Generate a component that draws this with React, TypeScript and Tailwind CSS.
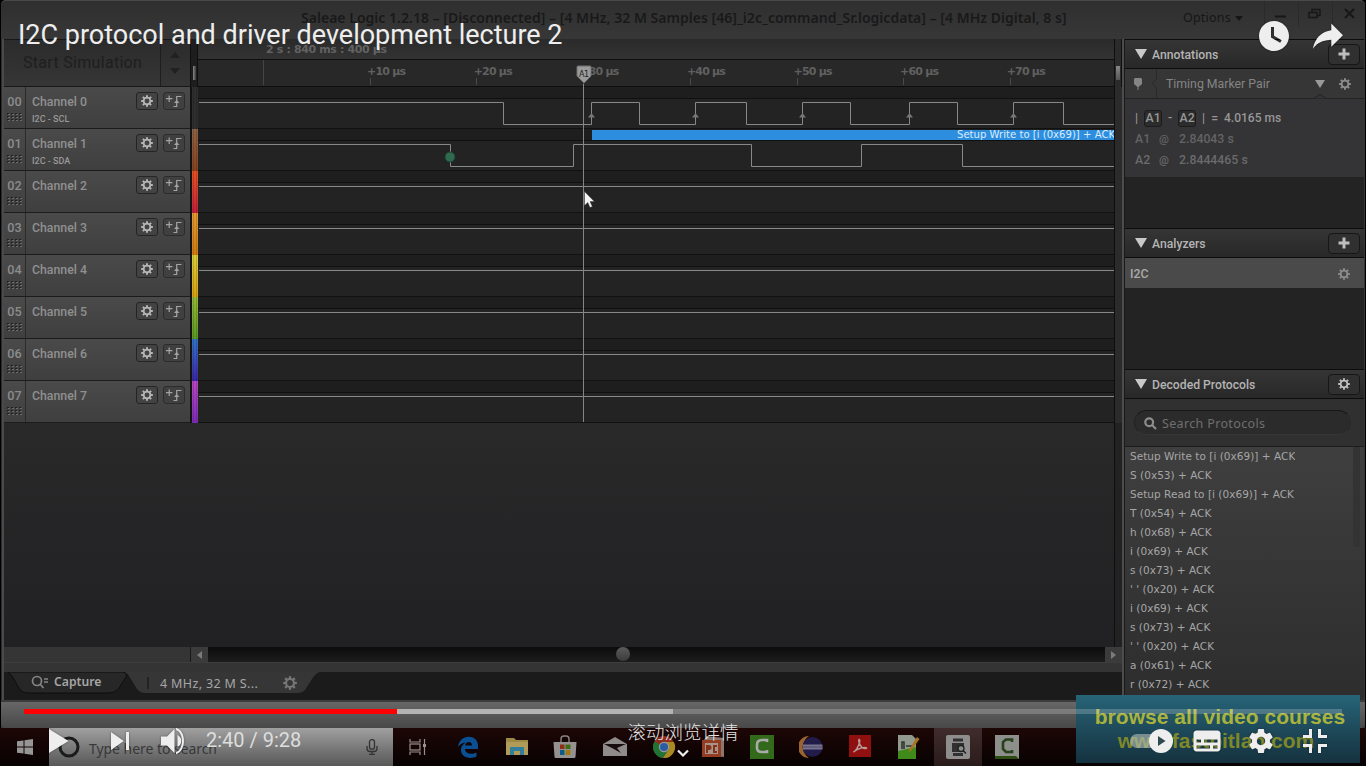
import React from "react";

const UI = "font-['Roboto','Liberation_Sans',sans-serif]";
const HUM = "font-['Noto_Sans','Open_Sans',sans-serif]";
const DJV = "font-['DejaVu_Sans','Noto_Sans',sans-serif]";

function Cog({ className }: { className: string }) {
  return (
    <svg viewBox="0 0 16 16" className={className} fill="none" stroke="currentColor">
      <circle cx="8" cy="8" r="4.5" strokeWidth="2.4" />
      <g strokeWidth="2.6">
        {[0, 45, 90, 135, 180, 225, 270, 315].map((a) => (
          <path key={a} d="M8 3V0.2" transform={`rotate(${a} 8 8)`} />
        ))}
      </g>
    </svg>
  );
}

function Trigger() {
  return (
    <svg viewBox="0 0 16 14" className="h-[14px] w-4" fill="none" stroke="#a3a3a3" strokeWidth="1.2">
      <path d="M0 4.7H6.4M3.2 1.5V7.9M7.5 12.5H10.7V2.5H15.5" />
      <path d="M8 9H13.4L10.7 6Z" fill="#a3a3a3" stroke="none" />
    </svg>
  );
}

function Grip() {
  return (
    <svg viewBox="0 0 15 8" className="h-2 w-[15px]">
      {[0, 1, 2].map((r) =>
        [0, 1, 2, 3].map((c) => (
          <g key={`${r}${c}`}>
            <rect x={c * 4} y={r * 3} width="2" height="1.4" fill="#202020" />
            <rect x={c * 4 + 1} y={r * 3 + 1} width="2" height="1" fill="#6c6c6c" />
          </g>
        )),
      )}
    </svg>
  );
}

const flat = "M1 15.5H916";
const channels = [
  { n: 0, sub: "I2C - SCL", bar: "bg-[#2e2e2e]", d: "M1 15.5H305.5V37.5H393.5V15.5H441.5V37.5H497.5V15.5H548.5V37.5H604.5V15.5H652.5V37.5H711.5V15.5H759.5V37.5H815.5V15.5H865.5V37.5H916" },
  { n: 1, sub: "I2C - SDA", bar: "bg-linear-to-b from-[#8a6244] to-[#87421f]", d: "M1 15.5H252.5V37.5H375.5V15.5H553.5V37.5H663.5V15.5H764.5V37.5H916" },
  { n: 2, bar: "bg-linear-to-b from-[#e2501f] to-[#c11f38]", d: flat },
  { n: 3, bar: "bg-linear-to-b from-[#e09a35] to-[#d07a10]", d: flat },
  { n: 4, bar: "bg-linear-to-b from-[#d6cd3a] to-[#d6a010]", d: flat },
  { n: 5, bar: "bg-linear-to-b from-[#93b53a] to-[#5b9722]", d: flat },
  { n: 6, bar: "bg-linear-to-b from-[#2f70c4] to-[#3b24a4]", d: flat },
  { n: 7, bar: "bg-linear-to-b from-[#b646c0] to-[#7a2cb4]", d: flat },
];

function ChannelRow({ c }: { c: (typeof channels)[number] }) {
  return (
    <div className="flex h-[42px]">
      <div className="flex w-[186px] border-b border-[#1c1c1c] bg-linear-to-b from-[#4a4a4b] to-[#3f3f40]">
        <div className={`flex w-[22px] flex-col items-center border-r border-[#2b2b2b] pt-[7px] ${UI}`}>
          <span className="text-[12.6px] leading-4 font-medium text-[#8c8c8c]">0{c.n}</span>
          <span className="mt-[3px]"><Grip /></span>
        </div>
        <div className={`flex-1 pt-[7px] pl-[6px] ${UI}`}>
          <div className="text-[12.3px] leading-4 font-medium text-[#909090]">Channel {c.n}</div>
          {c.sub && <div className="mt-[3px] text-[9px] leading-3 font-medium text-[#999]">{c.sub}</div>}
        </div>
        <div className="flex gap-[5px] pt-[5px] pr-[5px]">
          <span className="flex h-[18px] w-[22px] items-center justify-center rounded-[3px] border border-[#242424] bg-[#434343] text-[#b6b6b6]">
            <Cog className="size-3" />
          </span>
          <span className="flex h-[18px] w-[22px] items-center justify-center rounded-[3px] border border-[#2c2c2c] bg-[#404040]">
            <Trigger />
          </span>
        </div>
      </div>
      <div className="flex w-2 border-l-2 border-[#121212]">
        <div className={`flex w-[6px] justify-center gap-[2px] ${c.bar}`}>
          <i className="w-px bg-black/15" />
          <i className="w-px bg-black/15" />
        </div>
      </div>
      <div className="w-[916px] border-b border-[#111] bg-[#232324]">
        <div className="h-3 border-b border-[#101010] bg-[#1e1e1f]" />
        <svg viewBox="0 12 916 29" className="block h-[29px] w-[916px]" fill="none">
          <path d={c.d} stroke="#888" />
          {c.n === 0 &&
            [393.5, 497.5, 604.5, 711.5, 815.5].map((x) => (
              <path key={x} d={`M${x - 3.5} 30.5L${x} 26L${x + 3.5} 30.5Z`} fill="#777" />
            ))}
          {c.n === 1 && <circle cx="252" cy="28" r="5" fill="#2f6b4e" stroke="#1d4131" />}
        </svg>
      </div>
      <div className="w-2 border-l border-[#0e0e0e] bg-[#2b2b2b]" />
    </div>
  );
}

function Ruler() {
  return (
    <svg viewBox="0 0 916 48" className="h-[48px] w-[916px] shrink-0">
      <defs>
        <linearGradient id="rt" x2="0" y2="1"><stop stopColor="#2a2a2a" /><stop offset="1" stopColor="#333" /></linearGradient>
      </defs>
      <rect width="916" height="20" fill="url(#rt)" />
      <rect y="20" width="916" height="1" fill="#0e0e0e" />
      <rect y="21" width="916" height="26" fill="#282828" />
      <rect y="47" width="916" height="1" fill="#0e0e0e" />
      <text x="68" y="14" textLength="121" className="fill-[#626262] font-['DejaVu_Sans'] text-[11px] font-bold">2 s : 840 ms : 400 µs</text>
      <path d="M65.5 21V46" stroke="#454545" />
      {[1, 2, 3, 4, 5, 6, 7].map((i) => (
        <g key={i}>
          <path d={`M${Math.round(65 + i * 106.7) + 0.5} 39V46`} stroke="#4a4a4a" />
          <text x={62.5 + i * 106.6} y="36" textLength="39" className="fill-[#606060] font-['DejaVu_Sans'] text-[11px] font-bold">+{i}0 µs</text>
        </g>
      ))}
    </svg>
  );
}

function PanelHeader({ title, cog }: { title: string; cog?: boolean }) {
  return (
    <div className="flex h-[30px] shrink-0 items-center border-y border-[#0d0d0d] bg-linear-to-b from-[#353535] to-[#282828] pr-1 pl-[10px]">
      <svg viewBox="0 0 12 10" className="mb-px h-[10px] w-3"><path d="M0 0H12L6 10Z" fill="#c9c9c9" /></svg>
      <span className={`ml-[5px] flex-1 pt-[2px] text-[12.2px] font-medium text-[#b4b4b4] ${UI}`}>{title}</span>
      <span className="flex h-[21px] w-8 items-center justify-center rounded-[4px] border border-[#161616] bg-[#303030] text-[#bdbdbd]">
        {cog ? <Cog className="size-[12px]" /> : <svg viewBox="0 0 12 12" className="size-3"><path d="M6 .5V11.5M.5 6H11.5" stroke="currentColor" strokeWidth="3" /></svg>}
      </span>
    </div>
  );
}

const decoded = [
  "Setup Write to [i (0x69)] + ACK", "S (0x53) + ACK", "Setup Read to [i (0x69)] + ACK", "T (0x54) + ACK",
  "h (0x68) + ACK", "i (0x69) + ACK", "s (0x73) + ACK", "' ' (0x20) + ACK", "i (0x69) + ACK", "s (0x73) + ACK",
  "' ' (0x20) + ACK", "a (0x61) + ACK", "r (0x72) + ACK",
];

function SidePanel() {
  return (
    <div className="flex h-[661px] w-[239px] flex-col overflow-hidden rounded-b-[4px] bg-[#232324]">
      <PanelHeader title="Annotations" />
      <div className="relative flex h-[30px] items-center border-b border-[#222] bg-[#363636] pr-[13px] pl-[9px]">
        <svg viewBox="0 0 8 12" className="h-3 w-2"><path d="M1 0H7L8 1V6L4.5 9V12H3.5V9L0 6V1Z" fill="#858585" /></svg>
        <svg viewBox="0 0 8 29" className="ml-2 h-[29px] w-2" fill="none"><path d="M6.5 0V10L2.5 14.5L6.5 19V29" stroke="#292929" /></svg>
        <span className={`ml-2 flex-1 pt-px text-[12.3px] text-[#858585] ${UI}`}>Timing Marker Pair</span>
        <svg viewBox="0 0 10 8" className="h-2 w-[10px]"><path d="M0 0H10L5 8Z" fill="#9a9a9a" /></svg>
        <Cog className="ml-[14px] size-3 text-[#8d8d8d]" />
        <svg viewBox="0 0 12 5" className="absolute right-[38px] bottom-[-1px] h-[5px] w-3"><path d="M0 4.5L6 .5L12 4.5" fill="#343335" stroke="#222" /></svg>
      </div>
      <div className={`h-[78px] bg-[#343335] pt-[9px] pl-[10px] text-[12.3px] leading-[21px] font-medium ${UI}`}>
        <div className="flex items-center text-[#979797]">
          <span>|</span>
          <span className="ml-[6px] w-[18px] rounded-[3px] border border-[#1c1c1c] bg-[#2c2c2d] text-center leading-[15px]">A1</span>
          <span className="w-4 text-center">-</span>
          <span className="w-[18px] rounded-[3px] border border-[#1c1c1c] bg-[#2c2c2d] text-center leading-[15px]">A2</span>
          <span className="ml-[6px]">|</span>
          <span className="ml-[6px]">=</span>
          <span className="ml-[6px] text-[12px]">4.0165 ms</span>
        </div>
        <div className="flex text-[#636364]"><span className="w-6">A1</span><span className="w-5 text-[11px]">@</span><span>2.84043 s</span></div>
        <div className="flex text-[#6a6a6b]"><span className="w-6">A2</span><span className="w-5 text-[11px]">@</span><span>2.8444465 s</span></div>
      </div>
      <div className="h-[51px] shrink-0" />
      <PanelHeader title="Analyzers" />
      <div className={`flex h-[30px] shrink-0 items-center justify-between bg-[#4a4a4a] pt-[3px] pr-[14px] pl-[5px] text-[12.3px] font-medium text-[#aaa] ${UI}`}>
        I2C
        <Cog className="mb-[2px] size-3 text-[#8b8b8b]" />
      </div>
      <div className="h-[81px] shrink-0" />
      <PanelHeader title="Decoded Protocols" cog />
      <div className="h-[47px] shrink-0 bg-[#303031] px-[9px] pt-[11px]">
        <div className={`flex h-[25px] w-[217px] items-center rounded-full border border-t-[#181818] border-r-[#2a2a2a] border-b-[#363636] border-l-[#222] bg-[#2b2b2b] pt-[3px] pl-[9px] text-[12.5px] tracking-[0.35px] text-[#6f6f6f] ${HUM}`}>
          <svg viewBox="0 0 13 13" className="mr-[5px] mb-px size-[13px]" fill="none" stroke="#8d8d8d" strokeWidth="2.2"><circle cx="5.2" cy="5.2" r="3.9" /><path d="M8 8L12 12" /></svg>
          Search Protocols
        </div>
      </div>
      <div className={`flex min-h-0 flex-1 justify-between border-t border-[#1c1c1c] bg-linear-to-b from-[#3f3f3f] to-[#2d2d2e] pl-[5px] text-[10.5px] tracking-[0.03px] text-[#a6a6a6] ${DJV}`}>
        <div className="overflow-hidden">
          {decoded.map((t, i) => (
            <div key={i} className="h-[19px] leading-[19px] whitespace-pre">{t}</div>
          ))}
        </div>
        <div className="mr-1 h-[100px] w-[7px] bg-[#333]" />
      </div>
    </div>
  );
}

function TabStrip() {
  return (
    <div className="relative h-[28px]">
      <svg viewBox="1 0 1118 28" className="h-[28px] w-[1118px]">
        <rect width="1119" height="28" fill="#1b1b1c" />
        <path d="M100 0H317C313 1 311 4 309 7L302 18Q299 21 294 21H142Q137 21 134 17L126 4Q124 0 118 0Z" fill="#363637" />
        <path d="M5 0H120Q125 1 123 5L116 16Q112 21 105 21H25Q19 21 16 16L9 4Z" fill="#272728" stroke="#0d0d0d" />
        <path d="M145 5V17" stroke="#222" strokeWidth="2" />
        <g fill="none" stroke="#858585" strokeWidth="1.7">
          <circle cx="34" cy="9" r="4.5" />
          <path d="M37 12L40.5 16M41 7H45M41 10H45" />
        </g>
      </svg>
      <span className={`absolute top-0 left-[50px] text-[12.2px] leading-[19px] font-semibold text-[#a5a5a5] ${HUM}`}>Capture</span>
      <span className={`absolute top-[2px] left-[156px] text-[12.5px] leading-[19px] tracking-[0.35px] text-[#a6a6a6] ${HUM}`}>4 MHz, 32 M S...</span>
      <span className="absolute top-[4px] left-[279px] text-[#777]"><Cog className="size-[14px]" /></span>
    </div>
  );
}

function CapturePane() {
  return (
    <div className="relative w-[1118px] overflow-hidden">
      <div className="flex h-[48px]">
        <div className="flex w-[186px] border-y border-[#171717] bg-linear-to-b from-[#2b2b2b] to-[#363636]">
          <span className={`w-[157px] border-r border-[#1e1e1e] pt-[11px] pl-[19px] text-[16px] leading-6 tracking-[0.3px] whitespace-nowrap text-[#1e1e1e] ${UI}`}>
            Start Simulation
          </span>
          <svg viewBox="0 0 10 22" className="mt-3 ml-[9px] h-[22px] w-[10px]" fill="#212121"><path d="M0 6L5 0L10 6ZM0 16L5 22L10 16Z" /></svg>
        </div>
        <div className="flex w-2 items-end justify-center border-x border-[#0f0f0f] bg-[#1e1e1e] pb-[7px]">
          <div className="h-[14px] w-[3px] bg-linear-to-r from-[#888] to-[#3c3c3c]" />
        </div>
        <Ruler />
        <div className="flex w-2 items-end justify-center border-x border-[#0f0f0f] bg-[#2b2b2b] pb-[7px]">
          <div className="h-[14px] w-[4px] bg-linear-to-b from-[#888] to-[#555]" />
        </div>
      </div>
      {channels.map((c) => <ChannelRow key={c.n} c={c} />)}
      <div className="flex h-[224px] justify-between bg-linear-to-b from-[#29292a] to-[#212123]">
        <i />
        <div className="w-2 border-l border-[#0e0e0e] bg-[#222]" />
      </div>
      <div className="flex h-[15px]">
        <div className="w-[187px] border-r border-[#181818] bg-[#353536]" />
        <div className="flex w-[17px] items-center justify-center bg-[#3b3b3c]"><svg viewBox="0 0 5 8" className="h-2 w-[5px]"><path d="M5 0V8L0 4Z" fill="#7b7b7b" /></svg></div>
        <div className="flex flex-1 justify-center bg-linear-to-b from-[#0c0c0c] to-[#1d1d1d] pr-[67px]">
          <div className="size-[14px] rounded-full bg-linear-to-b from-[#5b5b5b] to-[#3c3c3c]" />
        </div>
        <div className="flex w-[17px] items-center justify-center bg-[#3b3b3c]"><svg viewBox="0 0 5 8" className="h-2 w-[5px]"><path d="M0 0V8L5 4Z" fill="#7b7b7b" /></svg></div>
      </div>
      <div className="h-[10px] border-t border-[#3d3d3d] bg-[#343435]" />
      <TabStrip />

      <div className={`absolute top-[91px] left-[588px] flex h-[10px] w-[522px] items-center overflow-hidden bg-[#2d8ee0] pl-[365px] text-[10.1px] leading-[10px] text-[#dcecfb] ${DJV}`}>
        <span className="whitespace-nowrap">Setup Write to [i (0x69)] + ACK</span>
      </div>
      <div className="absolute top-[45px] left-[579px] h-[338px] w-px bg-[#858585]" />
      <svg viewBox="0 0 16 19" className="absolute top-[26px] left-[572px] h-[19px] w-4">
        <path d="M1 2Q1 1 2 1H14Q15 1 15 2V11L8 18L1 11Z" fill="#9b9b9b" stroke="#707070" />
        <text x="3" y="11.5" textLength="10" className="fill-[#222] font-['DejaVu_Sans'] text-[8px]">A1</text>
      </svg>
      <svg viewBox="0 0 11 17" className="absolute top-[152px] left-[580px] h-[17px] w-[11px]">
        <path d="M.5 .5V14.5L3.8 11.5L6 16.5L8.3 15.5L6 10.5H10.3Z" fill="#f4f4f4" stroke="#333" strokeWidth=".4" />
      </svg>
    </div>
  );
}

function Taskbar() {
  return (
    <div className="flex h-[38px] bg-linear-to-b from-[#1d0706] to-[#080202]">
      <div className="flex w-[49px] items-center justify-center pl-[1px]">
        <svg viewBox="0 0 16 16" className="size-4" fill="#969696"><path d="M0 2.3L6.5 1.4V7.5H0ZM7.5 1.2L16 0V7.5H7.5ZM0 8.5H6.5V14.6L0 13.7ZM7.5 8.5H16V16L7.5 14.8Z" /></svg>
      </div>
      <div className="flex w-[344px] items-center bg-linear-to-b from-[#a0a0a0] to-[#585858] pr-[15px] pl-2">
        <svg viewBox="0 0 22 22" className="ml-px size-[22px]" fill="none"><circle cx="11" cy="11" r="9" stroke="#1b1b1b" strokeWidth="3" /></svg>
        <span className={`ml-[9px] flex-1 pt-[3px] text-[14px] tracking-[-0.05px] text-[#383838] ${HUM}`}>Type here to search</span>
        <svg viewBox="0 0 12 16" className="h-4 w-3" fill="none" stroke="#333" strokeWidth="1.3"><rect x="3.5" y=".7" width="5" height="9.5" rx="2.3" /><path d="M1 7V9.5Q1 12.5 4 12.5H8Q11 12.5 11 9.5V7M6 12.5V15M3 15.3H9" /></svg>
      </div>
      <div className="flex items-center">
        <Slot><svg viewBox="0 0 18 16" className="h-4 w-[18px]" fill="none" stroke="#9a8f8d" strokeWidth="1.2"><path d="M1 0V3H11V0M1 16V13H11V16M15.5 0V16" /><rect x="1" y="5" width="10" height="6" /><path d="M14 5H17V8H14Z" fill="#9a8f8d" stroke="none" /></svg></Slot>
        <Slot><svg viewBox="0 0 22 22" className="ml-[2px] size-[22px]"><path d="M1 11C2 4 7 0.5 12 0.8C18 1 21 5 21 10V13H8C8 17 14 19.5 19.5 16.5V20.5C12 24 3.5 21 4 13.5C4 10.5 6 8 9 6.5C6 6.5 3 8 1 11ZM8.2 9.5H15C15 4.5 8.5 5 8.2 9.5Z" fill="#0a4f92" /></svg></Slot>
        <Slot><svg viewBox="0 0 22 20" className="ml-[2px] h-5 w-[22px]"><path d="M0 1H8L10 3H22V18H0Z" fill="#9d8844" /><path d="M0 5H22V18H0Z" fill="#b09b58" /><path d="M4 18V11Q4 10 5 10H17Q18 10 18 11V18H14V14H8V18Z" fill="#317f9c" /></svg></Slot>
        <Slot><svg viewBox="0 0 24 24" className="size-6"><path d="M8 7V4Q8 1 11 1H13Q16 1 16 4V7" fill="none" stroke="#898381" strokeWidth="1.4" /><path d="M0.5 7H23.5L22.5 22Q22.5 23 21 23H3Q1.5 23 1.5 22Z" fill="#959191" /><path d="M7 9.5H11.5V14H7Z" fill="#8d2e12" /><path d="M12.5 9.5H17.5V14H12.5Z" fill="#3d6d14" /><path d="M7 15H11.5V20H7Z" fill="#0b5a85" /><path d="M12.5 15H17.5V20H12.5Z" fill="#a07812" /></svg></Slot>
        <Slot><svg viewBox="0 0 24 20" className="ml-[2px] h-5 w-6"><path d="M0 7L12 0L24 7V19H0Z" fill="#8e8b8a" /><path d="M1 7H23L14 11L18 16L9 11Z" fill="#170d0c" /></svg></Slot>
        <Slot><svg viewBox="0 0 24 24" className="ml-[2px] size-6"><circle cx="12" cy="12" r="11" fill="#8e2d20" /><path d="M12 12L2.5 6.5A11 11 0 0 0 11 23L17 14Z" fill="#1f7334" /><path d="M12 7H21.8A11 11 0 0 1 11 23L17 14Z" fill="#a98b21" /><circle cx="12" cy="12" r="5.2" fill="#9a9a9a" /><circle cx="12" cy="12" r="4" fill="#285da3" /></svg></Slot>
        <Slot><svg viewBox="0 0 24 24" className="ml-[2px] size-6"><path d="M5 1L23 3V22L5 20Z" fill="#8b7770" /><path d="M1 5H20V22H1Z" fill="#943d22" /><path d="M4 8H17V19H4Z" fill="#a79389" /><path d="M5 18V10H8Q10.5 10 10.5 12.5T8 15H7V18ZM16 10V12H14V16H16V18H12V10Z" fill="#843119" /></svg></Slot>
        <Slot><svg viewBox="0 0 24 24" className="ml-[2px] size-6"><path d="M0 0H24V24H0Z" fill="#32691b" /><path d="M17 7V5H12Q7 5 7 10V13Q7 17 12 17H17V15" fill="none" stroke="#aaa" strokeWidth="2.6" /></svg></Slot>
        <Slot><svg viewBox="0 0 24 24" className="ml-[2px] size-6"><path d="M10 1A11 11 0 0 0 10 23A13 13 0 0 1 10 1Z" fill="#9b632d" /><circle cx="13.5" cy="12" r="10" fill="#211c49" /><path d="M4 9.5H23.5V14.5H4Z" fill="#77748e" /><path d="M4 12H23.5" stroke="#4a4770" /></svg></Slot>
        <Slot><svg viewBox="0 0 22 22" className="ml-[2px] size-[22px] -translate-y-px"><path d="M0 0H22V22H0Z" fill="#8f100f" /><path d="M4.5 17C7 16 12 7 10.5 4.5C9 4 9.5 9 13 12.5C15 14 18 14 17.5 12.8C15 11.5 8 14 4.5 17Z" fill="none" stroke="#b69b99" strokeWidth="1.4" /></svg></Slot>
        <Slot><svg viewBox="0 0 24 24" className="size-6"><path d="M2 0H16L20 4V24H2Z" fill="#929a8d" /><path d="M2 16L20 12V24H2Z" fill="#3f8a19" /><path d="M6 14V7H8V14M10 11H16" fill="none" stroke="#303830" strokeWidth="1.6" /><path d="M21 2L23.5 4L15 16L13 17L13.5 14Z" fill="#a7741d" /></svg></Slot>
        <div className="ml-[2px] flex h-[38px] w-12 items-center justify-center bg-linear-to-b from-[#402c2c] to-[#2a1b1b]">
          <svg viewBox="0 0 24 24" className="size-6"><rect width="24" height="24" rx="2" fill="#8e8e8e" /><path d="M7 3.5H17V6.5H7ZM7 18H17V21H7Z" fill="#303030" /><path d="M6 8H18V17H6Z" fill="#303030" /><circle cx="15" cy="13.5" r="3" fill="#8e8e8e" stroke="#222" strokeWidth="1.3" /><path d="M17 15.5L20 18.5" stroke="#222" strokeWidth="1.6" /></svg>
        </div>
        <Slot><svg viewBox="0 0 24 24" className="size-6"><path d="M0 0H24V24H0Z" fill="#8c8f8a" /><path d="M0 21H21L24 24H0Z" fill="#2c4c12" /><path d="M17 7V4.5H11L8 7V14L11 17H17V15" fill="none" stroke="#29401c" strokeWidth="2.6" /></svg></Slot>
      </div>
    </div>
  );
}

function Slot({ children }: { children: React.ReactNode }) {
  return <div className="flex w-[49px] items-center justify-center">{children}</div>;
}

function PlayerIcon({ d }: { d: string }) {
  return <svg viewBox="0 0 36 36" className="size-[54px] shrink-0 drop-shadow-[0_0_1px_rgba(0,0,0,0.4)]" fill="#eee" fillRule="evenodd"><path d={d} /></svg>;
}

const I = {
  clock: "M18 8C12.47 8 8 12.47 8 18C8 23.52 12.47 28 18 28C23.52 28 28 23.52 28 18C28 12.47 23.52 8 18 8ZM16 19.02L16 12L18 12L18 17.86L23.1 20.81L22.1 22.54Z",
  share: "m20.2 14.19 0-4.45 7.79 7.79-7.79 7.56 0-4.56C16.27 20.69 12.1 21.81 9.34 24.76 8.8 25.13 7.6 27.29 8.12 25.65 9.08 21.32 11.8 17.18 15.98 15.38c1.33-.6 2.76-.98 4.21-1.19z",
  play: "M12 26L25 18L12 10z",
  next: "M12 24L20.5 18L12 12V24zM22 12v12h2V12h-2z",
  volume: "M8 21H12L17 26V10L12 15H8ZM19 14V22C20.48 21.32 21.5 19.77 21.5 18C21.5 16.26 20.48 14.74 19 14ZM18 10.6C20.7 11.4 22 14.83 22 18C22 21.17 20.7 24.6 18 25.4V26.77C21.3 25.86 23.3 22.28 23.3 18C23.3 13.72 21.3 10.14 18 9.23Z",
  subs: "M11 11C9.89 11 9 11.9 9 13V23C9 24.1 9.89 25 11 25H25C26.1 25 27 24.1 27 23V13C27 11.9 26.1 11 25 11ZM11 17H14V19H11ZM20 23H11V21H20ZM25 23H22V21H25ZM25 19H16V17H25Z",
  cog: "m23.94 18.78c.03-.25.05-.51.05-.78 0-.27-.02-.52-.05-.78l1.68-1.32c.15-.12.19-.33.09-.51l-1.6-2.76c-.09-.17-.31-.24-.48-.17l-1.99.8c-.41-.32-.86-.58-1.35-.78l-.3-2.12c-.02-.19-.19-.33-.39-.33l-3.2 0c-.2 0-.36.14-.39.33l-.3 2.12c-.48.2-.93.47-1.35.78l-1.99-.8c-.18-.07-.39 0-.48.17l-1.6 2.76c-.1.17-.05.39.09.51l1.68 1.32c-.03.25-.05.52-.05.78 0 .26.02.52.05.78l-1.68 1.32c-.15.12-.19.33-.09.51l1.6 2.76c.09.17.31.24.48.17l1.99-.8c.41.32.86.58 1.35.78l.3 2.12c.02.19.19.33.39.33l3.2 0c.2 0 .36-.14.39-.33l.3-2.12c.48-.2.93-.47 1.35-.78l1.99.8c.18.07.39 0 .48-.17l1.6-2.76c.09-.17.05-.39-.09-.51l-1.68-1.32zm-5.94 2.01c-1.54 0-2.8-1.25-2.8-2.8 0-1.54 1.25-2.8 2.8-2.8 1.54 0 2.8 1.25 2.8 2.8 0 1.54-1.25 2.8-2.8 2.8z",
  shrink: "M14 14H10V16H16V10H14ZM22 14V10H20V16H26V14ZM20 26H22V22H26V20H20ZM10 22H14V26H16V20H10Z",
};

function PlayerOverlay() {
  return (
    <div className="absolute inset-0 flex flex-col justify-between overflow-hidden">
      <div className="flex h-[63px] pt-[9px] pr-[11px] pl-[18px]">
        <h1 className="flex-1 pt-[10px] font-['Roboto'] text-[27px] leading-8 text-[#eee]">I2C protocol and driver development lecture 2</h1>
        <PlayerIcon d={I.clock} />
        <PlayerIcon d={I.share} />
      </div>
      <div className="relative h-[57px]">
        <div className="mx-6 flex h-[5px] bg-white/20">
          <div className="w-[373px] bg-[#f00]" />
          <div className="w-[276px] bg-[#b3b3b3]" />
        </div>
        <div className="flex h-[54px] pl-[31px]">
          <PlayerIcon d={I.play} />
          <div className="-ml-[1px] w-[62px] pl-[9px]"><PlayerIcon d={I.next} /></div>
          <div className="w-[62px] pl-[3px]"><PlayerIcon d={I.volume} /></div>
          <span className="-ml-[2px] flex-1 font-['Roboto'] text-[20px] leading-[52px] text-[#dedede]">2:40 / 9:28</span>
          <div className="flex w-[57px] items-center pl-[7px]">
            <div className="flex h-[14px] w-[42px] items-center justify-end rounded-full bg-[#b5c0b8]/60">
              <svg viewBox="0 0 24 24" className="-mr-px size-[24px] shrink-0"><circle cx="12" cy="12" r="12" fill="#eee" /><path d="M9 7V17L16.5 12Z" fill="#2c4a50" /></svg>
            </div>
          </div>
          <PlayerIcon d={I.subs} />
          <PlayerIcon d={I.cog} />
          <PlayerIcon d={I.shrink} />
          <i className="w-6" />
        </div>
        <div className="absolute top-[10px] left-[627px] flex w-[112px] flex-col items-center">
          <span className="font-['Noto_Sans_CJK_SC',sans-serif] text-[18.5px] leading-[24px] font-light whitespace-nowrap text-[#e4e4e4]">滚动浏览详情</span>
          <svg viewBox="0 0 12 8" className="mt-[6px] h-2 w-3" fill="none"><path d="M1 1.5L6 6.5L11 1.5" stroke="#eee" strokeWidth="2.2" /></svg>
        </div>
      </div>
    </div>
  );
}

export default function App() {
  return (
    <div className="relative h-[766px] w-[1366px] overflow-hidden bg-black">
      <div className="mr-[1px] ml-[1px] rounded-t-[5px] bg-[#363637]">
        <div className="flex h-[39px] rounded-t-[5px] border-t border-[#4a4a4a] bg-linear-to-b from-[#2f2f30] to-[#373738] pl-[300px]">
          <span className={`w-[767px] pt-[6px] text-[14px] leading-[22px] font-semibold tracking-[0.025px] whitespace-nowrap text-[#191919] ${HUM}`}>
            Saleae Logic 1.2.18 – [Disconnected] – [4 MHz, 32 M Samples [46]_i2c_command_Sr.logicdata] – [4 MHz Digital, 8 s]
          </span>
          <span className={`ml-[115px] flex w-[81px] items-center pb-1 text-[12.5px] tracking-[0.2px] text-[#161616] ${HUM}`}>
            Options
            <svg viewBox="0 0 8 5" className="ml-1 h-[5px] w-2"><path d="M0 0H8L4 5Z" fill="#161616" /></svg>
          </span>
          <svg viewBox="0 0 100 38" className="h-[38px] w-[100px]" fill="none" stroke="#171717">
            <path d="M.5 0V25M34.5 0V25M68.5 0V25" stroke="#2a2a2a" />
            <path d="M11 15.5H22" strokeWidth="2" />
            <path d="M45 11.5H53V16.5H45ZM48 11V8.5H56V14.5H53" strokeWidth="1.5" />
            <path d="M81 8L90 17M90 8L81 17" strokeWidth="2" />
          </svg>
        </div>
        <div className="flex h-[661px]">
          <div className="w-[3px] border-l border-[#2c2c2c] bg-[#4a4a4a]" />
          <CapturePane />
          <div className="w-[3px] border-r border-l-2 border-r-[#1a1a1a] border-l-[#4c4c4c]" />
          <SidePanel />
        </div>
        <div className="h-[28px] rounded-b-[4px] border-t-2 border-[#3c3c3c] bg-linear-to-b from-[#676767] to-[#484848]" />
      </div>
      <Taskbar />
      <div className="absolute top-[695px] left-[1076px] h-[68px] w-[284px] bg-linear-to-b from-[#276478] to-[#15323f] pt-[9px] text-center font-['Liberation_Sans'] text-[21px] leading-[25px] font-bold whitespace-nowrap">
        <div className="pl-[4px] tracking-[0.03px] text-[#a9b33b]">browse all video courses</div>
        <div className="-mt-px pr-[4px] text-[#7e8829]">www.fastbitlab.com</div>
      </div>
      <PlayerOverlay />
    </div>
  );
}
